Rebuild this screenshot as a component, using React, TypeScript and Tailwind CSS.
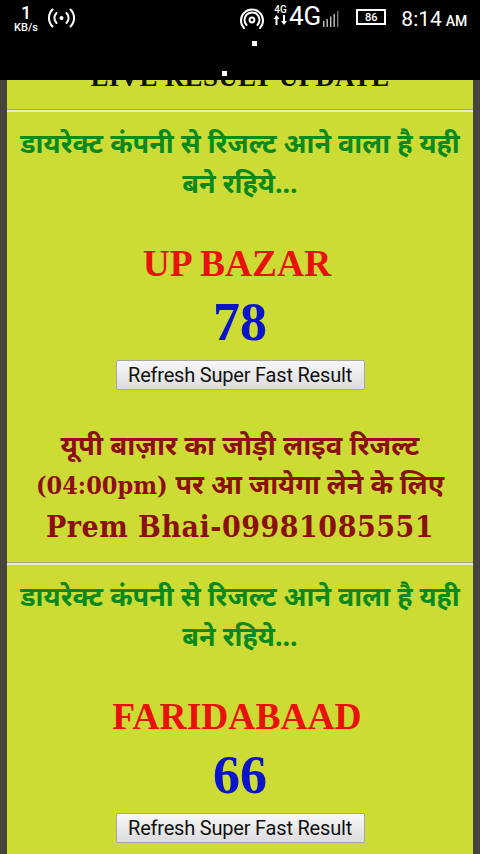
import React from "react";

const dv = "font-['Noto_Sans','DejaVu_Sans',sans-serif]";

function Rule() {
  return <div className="h-[3px] border-t border-[#a5a878] border-b-2 border-b-[#e8ecc4]" />;
}

function Block({ name, num }: { name: string; num: string }) {
  return (
    <div className="flex flex-col items-center text-center">
      <div className={`text-[27px] leading-[40px] font-bold text-[#0a8a1e] whitespace-nowrap ${dv}`}>
        डायरेक्ट कंपनी से रिजल्ट आने वाला है यही
        <br />
        बने रहिये...
      </div>
      <div className="h-[41px]" />
      <div className="text-[37.5px] leading-[40px] pr-[6px] font-bold text-[#e8120a] font-['Liberation_Serif',serif]">{name}</div>
      <div className="text-[54px] leading-[76px] font-bold text-[#0a14c8] font-['Liberation_Serif',serif]">{num}</div>
      <button className="w-[249px] h-[30px] rounded-[2px] border border-[#a8a8a0] bg-gradient-to-b from-[#f8f8f8] to-[#dcdcdc] text-[20px] leading-[26px] tracking-[-0.2px] text-[#111] font-['Roboto',sans-serif]">
        Refresh Super Fast Result
      </button>
    </div>
  );
}

function StatusBar() {
  return (
    <div className="absolute top-0 left-0 w-full h-[80px] bg-black text-white font-['Roboto',sans-serif] z-10 flex flex-col">
      <div className="flex items-start h-[40px] pt-[4px] pl-[13px] pr-[11px]">
        <div className="w-[26px] flex flex-col items-center">
          <span className="text-[18px] leading-[18px] font-medium">1</span>
          <span className="text-[11px] leading-[11px] font-medium">KB/s</span>
        </div>
        <svg className="ml-[9px] mt-[2px]" width="27" height="24" viewBox="0 0 27 24" fill="none" stroke="white" strokeWidth="2" strokeLinecap="round">
          <circle cx="13.5" cy="12" r="2" fill="white" stroke="none" />
          <path d="M8.5 7a7 7 0 0 0 0 10M18.5 7a7 7 0 0 1 0 10" />
          <path d="M4.5 3.5a12 12 0 0 0 0 17M22.5 3.5a12 12 0 0 1 0 17" />
        </svg>
        <svg className="ml-[165px] mt-[4px]" width="24" height="24" viewBox="0 0 24 24" fill="none" stroke="white" strokeWidth="2" strokeLinecap="round">
          <circle cx="12" cy="12" r="2.4" />
          <path d="M6.5 17a7.5 7.5 0 1 1 11 0" />
          <path d="M4 20a11 11 0 1 1 16 0" />
        </svg>
        <div className="ml-[9px] w-[15px] flex flex-col items-center">
          <span className="text-[10px] leading-[11px] font-medium">4G</span>
          <svg width="15" height="11" viewBox="0 0 15 11" fill="white">
            <path d="M3.5 0 6.5 4H4.5v6h-2V4H.5zM11 10 8 6h2V0h2v6h2z" />
          </svg>
        </div>
        <div className="ml-[1px] -mt-[4px] text-[26px] leading-[32px]">4G</div>
        <svg className="ml-[1px] mt-[6px]" width="18" height="18" viewBox="0 0 18 18" fill="#c4c4c4">
          <rect x="1" y="11" width="1.4" height="6" />
          <rect x="4.5" y="9" width="1.4" height="8" />
          <rect x="8" y="6.5" width="1.4" height="10.5" />
          <rect x="11.5" y="4" width="1.4" height="13" />
          <rect x="15" y="1" width="1.4" height="16" fill="#777" />
        </svg>
        <div className="ml-[16px] mt-[5px] w-[30px] h-[16px] border-2 border-white flex items-center justify-center text-[11px] leading-none font-medium">86</div>
        <div className="ml-[15px] text-[21px] leading-[30px]">8:14</div>
        <div className="ml-[4px] mt-[4px] text-[14px] leading-[26px] font-medium">AM</div>
      </div>
      <div className="pl-[252px] pt-[1px]"><div className="w-[5px] h-[5px] bg-white" /></div>
      <div className="pl-[222px] pt-[25px]"><div className="w-[5px] h-[5px] bg-white" /></div>
    </div>
  );
}

export default function App() {
  return (
    <div className="relative w-[480px] h-[854px] overflow-hidden bg-[#cddc34]">
      <StatusBar />
      <div className="w-full h-full border-x-[7px] border-[#45453f] bg-[#cddc34]">
        <div className="h-[109px] flex flex-col justify-end">
          <div className="h-[41px] text-center text-[27px] leading-[18px] tracking-[0.3px] text-[#111] font-['Liberation_Serif',serif] font-bold">LIVE RESULT UPDATE</div>
        </div>
        <Rule />
        <div className="pt-[11px]">
          <Block name="UP BAZAR" num="78" />
        </div>
        <div className="mt-[35px] text-center font-bold text-[#8c0f0f] font-['DejaVu_Serif_Condensed','DejaVu_Serif',serif]">
          <div className={`text-[27.5px] leading-[39px] ${dv}`}>यूपी बाज़ार का जोड़ी लाइव रिजल्ट</div>
          <div className="text-[25px] leading-[39px] whitespace-nowrap">(04:00pm) <span className={`text-[27px] ${dv}`}>पर आ जायेगा लेने के लिए</span></div>
          <div className="text-[30px] leading-[44px] tracking-[0.5px]">Prem Bhai-09981085551</div>
        </div>
        <div className="mt-[13px]"><Rule /></div>
        <div className="pt-[11px]">
          <Block name="FARIDABAAD" num="66" />
        </div>
      </div>
    </div>
  );
}
